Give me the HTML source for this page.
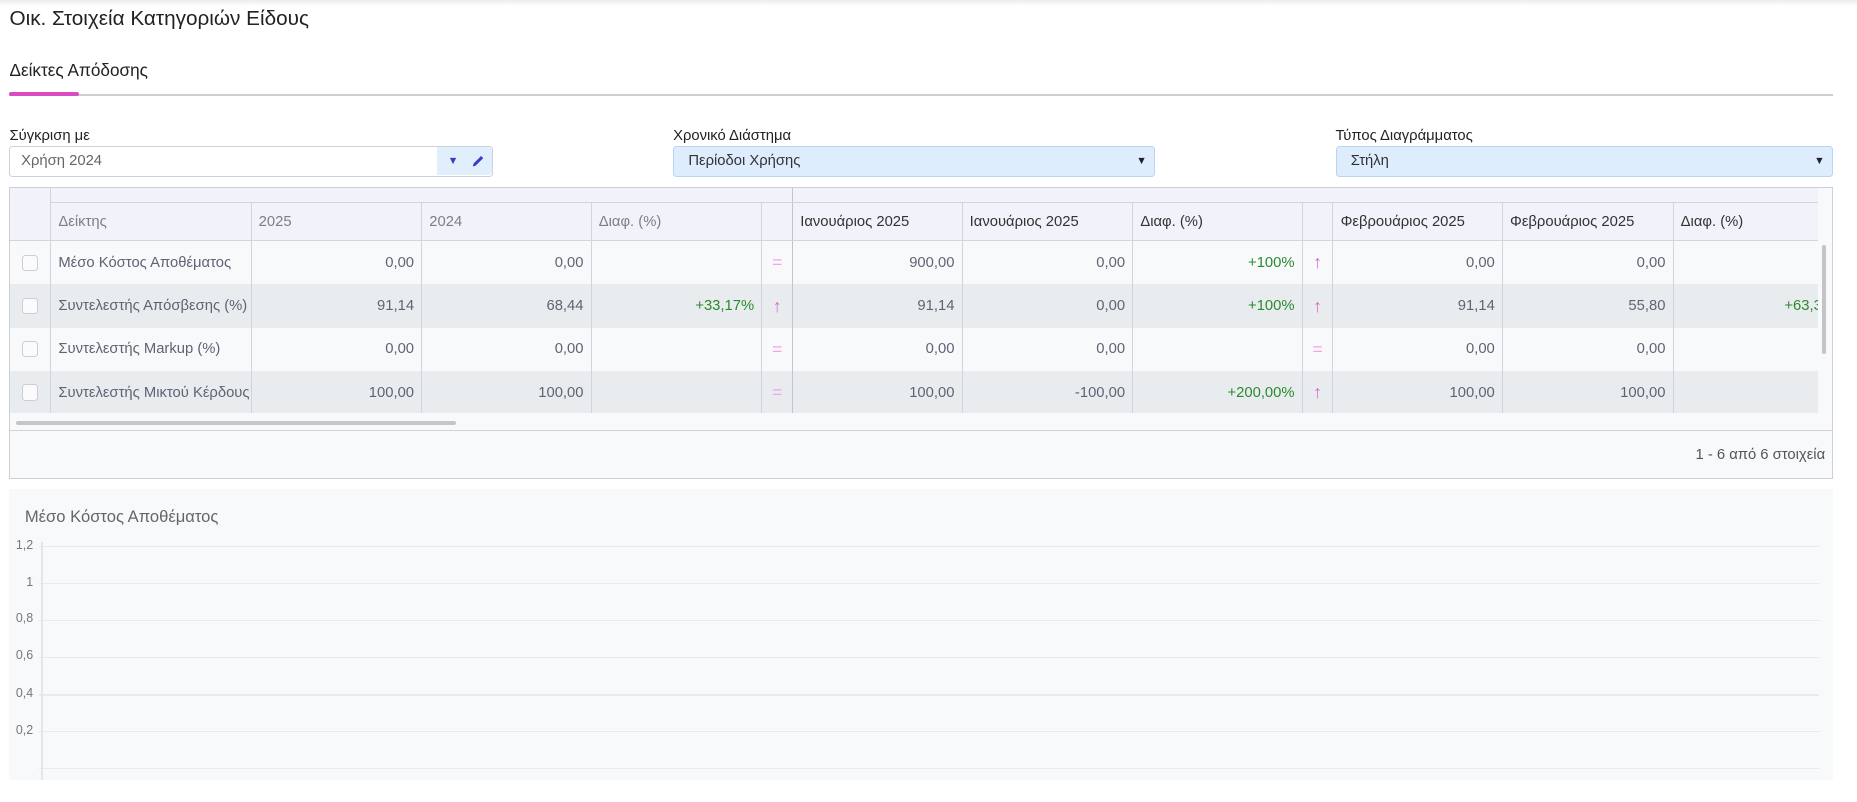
<!DOCTYPE html>
<html><head><meta charset="utf-8">
<style>
html,body{margin:0;padding:0;background:#fff;}
body{width:1567px;height:677px;zoom:1.18505;position:relative;overflow:hidden;font-family:"Liberation Sans","Noto Sans CJK SC",sans-serif;color:#333;}
.abs{position:absolute;}
.topsh{left:0;top:0;width:1567px;height:5px;background:linear-gradient(#ececec,#fff);}
.title{left:8px;top:6px;font-size:17.5px;color:#222;}
.sub{left:8px;top:51px;font-size:14.5px;color:#222;}
.pink{left:8px;top:78px;width:59px;height:3px;background:#d94cc3;border-radius:2px;}
.gline{left:8px;top:79.5px;width:1539px;height:1.5px;background:#cfcfd3;}
.lbl{top:108px;font-size:12.5px;color:#222;}
.inp{top:123px;height:26px;border:1px solid #c9d3df;border-radius:3px;box-sizing:border-box;font-size:12.5px;line-height:24px;}
.tri{position:absolute;font-size:9px;}
.tbl{left:8px;top:158px;width:1539px;height:246px;border:1px solid #cfd0d6;box-sizing:border-box;background:#f8f9fb;overflow:hidden;}
table{border-collapse:collapse;table-layout:fixed;position:absolute;left:0;top:0;width:1553px;}
td,th{padding:0 6px;font-weight:normal;font-size:12.5px;white-space:nowrap;overflow:hidden;}
th{background:#f2f2fa;text-align:left;border-right:1px solid #d3d3dc;border-bottom:1px solid #d3d3dc;}
th.l{color:#7a7f88;} th.d{color:#333;}
tr.g th{height:12px;}
tr.h th{height:31px;}
td{height:36.5px;text-align:right;color:#5d6472;border-right:1px solid #d3d3dc;}
td.n{text-align:left;}
tr.o td{background:#f8f9fb;} tr.e td{background:#e9ecef;}
td.ic{text-align:center;padding:0;color:#e064c9;font-size:15px;font-weight:bold;}
td.eq{text-align:center;padding:0;color:#f0a6e4;font-size:15px;}
.gr{color:#2a8a2e!important;}
.cb{display:inline-block;width:12px;height:12px;border:1px solid #ccd;border-radius:3px;background:#fbfbfc;vertical-align:middle;}
.fz{border-right:1px solid #c4c4cc!important;}
.chart{left:8px;top:413px;width:1539px;height:245px;background:#f8f9fb;}
.yl{position:absolute;width:20px;text-align:right;left:0;font-size:10.5px;color:#777;}
.gl{position:absolute;left:25px;width:1502px;height:1px;background:#e8eaee;}
</style></head><body>
<div class="abs topsh"></div>
<div class="abs title">Οικ. Στοιχεία Κατηγοριών Είδους</div>
<div class="abs sub">Δείκτες Απόδοσης</div>
<div class="abs gline"></div>
<div class="abs pink"></div>

<div class="abs lbl" style="left:8px">Σύγκριση με</div>
<div class="abs lbl" style="left:568px">Χρονικό Διάστημα</div>
<div class="abs lbl" style="left:1127px">Τύπος Διαγράμματος</div>

<div class="abs inp" style="left:8px;width:408px;background:#fff;color:#666;padding-left:9px;">Χρήση 2024
 <div style="position:absolute;right:0;top:0;width:46px;height:24px;background:#e1eefc;border-radius:0 3px 3px 0;"></div>
 <span class="tri" style="left:369px;top:0;color:#3a3acb;">▼</span>
 <svg style="position:absolute;left:389px;top:6px" width="12" height="12" viewBox="0 0 12 12"><path d="M1.5 10.5 L2.2 8 L8.5 1.7 L10.3 3.5 L4 9.8 Z" fill="#3a3acb"/></svg>
</div>
<div class="abs inp" style="left:568px;width:407px;background:#deedfd;border-color:#b9d5ef;color:#333;padding-left:12px;">Περίοδοι Χρήσης<span class="tri" style="left:390px;top:0;color:#222;">▼</span></div>
<div class="abs inp" style="left:1127px;width:420px;background:#deedfd;border-color:#b9d5ef;color:#333;padding-left:12px;">Στήλη<span class="tri" style="left:403px;top:0;color:#222;">▼</span></div>

<div class="abs tbl">
<table>
<colgroup><col style="width:34px"><col style="width:169px"><col style="width:144px"><col style="width:143px"><col style="width:144px"><col style="width:26px"><col style="width:143px"><col style="width:144px"><col style="width:143px"><col style="width:26px"><col style="width:143px"><col style="width:144px"><col style="width:150px"></colgroup>
<tr class="g"><th rowspan="2"></th><th colspan="5" class="fz"></th><th colspan="7"></th></tr>
<tr class="h"><th class="l">Δείκτης</th><th class="l">2025</th><th class="l">2024</th><th class="l">Διαφ. (%)</th><th class="fz"></th><th class="d">Ιανουάριος 2025</th><th class="d">Ιανουάριος 2025</th><th class="d">Διαφ. (%)</th><th></th><th class="d">Φεβρουάριος 2025</th><th class="d">Φεβρουάριος 2025</th><th class="d">Διαφ. (%)</th></tr>
<tr class="o"><td style="text-align:center"><span class="cb"></span></td><td class="n">Μέσο Κόστος Αποθέματος</td><td>0,00</td><td>0,00</td><td></td><td class="eq fz">=</td><td>900,00</td><td>0,00</td><td class="gr">+100%</td><td class="ic">↑</td><td>0,00</td><td>0,00</td><td></td></tr>
<tr class="e"><td style="text-align:center"><span class="cb"></span></td><td class="n">Συντελεστής Απόσβεσης (%)</td><td>91,14</td><td>68,44</td><td class="gr">+33,17%</td><td class="ic fz">↑</td><td>91,14</td><td>0,00</td><td class="gr">+100%</td><td class="ic">↑</td><td>91,14</td><td>55,80</td><td class="gr">+63,33%</td></tr>
<tr class="o"><td style="text-align:center"><span class="cb"></span></td><td class="n">Συντελεστής Markup (%)</td><td>0,00</td><td>0,00</td><td></td><td class="eq fz">=</td><td>0,00</td><td>0,00</td><td></td><td class="eq">=</td><td>0,00</td><td>0,00</td><td></td></tr>
<tr class="e"><td style="text-align:center"><span class="cb"></span></td><td class="n">Συντελεστής Μικτού Κέρδους</td><td>100,00</td><td>100,00</td><td></td><td class="eq fz">=</td><td>100,00</td><td>-100,00</td><td class="gr">+200,00%</td><td class="ic">↑</td><td>100,00</td><td>100,00</td><td></td></tr>
</table>
<div class="abs" style="left:1525px;top:0;width:14px;height:190px;background:#f8f9fb;"></div>
<div class="abs" style="left:1529px;top:48px;width:3px;height:92px;background:#c4c4c8;border-radius:2px;"></div>
<div class="abs" style="left:0;top:190px;width:1539px;height:14px;background:#f8f9fb;"></div>
<div class="abs" style="left:5px;top:196px;width:371px;height:4px;background:#c6c6ca;border-radius:2px;"></div>
<div class="abs" style="left:0;top:204px;width:1539px;height:1px;background:#d3d3d8;"></div>
<div class="abs" style="right:6px;top:218px;font-size:12.5px;color:#555;">1 - 6 από 6 στοιχεία</div>
</div>

<div class="abs chart">
<div class="abs" style="left:13px;top:15px;font-size:14px;color:#666;">Μέσο Κόστος Αποθέματος</div>
<div class="gl" style="top:48px"></div><div class="yl" style="top:41px">1,2</div>
<div class="gl" style="top:79px"></div><div class="yl" style="top:72px">1</div>
<div class="gl" style="top:110px"></div><div class="yl" style="top:103px">0,8</div>
<div class="gl" style="top:141px"></div><div class="yl" style="top:134px">0,6</div>
<div class="gl" style="top:173px"></div><div class="yl" style="top:166px">0,4</div>
<div class="gl" style="top:204px"></div><div class="yl" style="top:197px">0,2</div>
<div class="gl" style="top:235px"></div>
<div class="abs" style="left:27px;top:44px;width:1px;height:201px;background:#e4e6ea;"></div>
</div>
</body></html>
